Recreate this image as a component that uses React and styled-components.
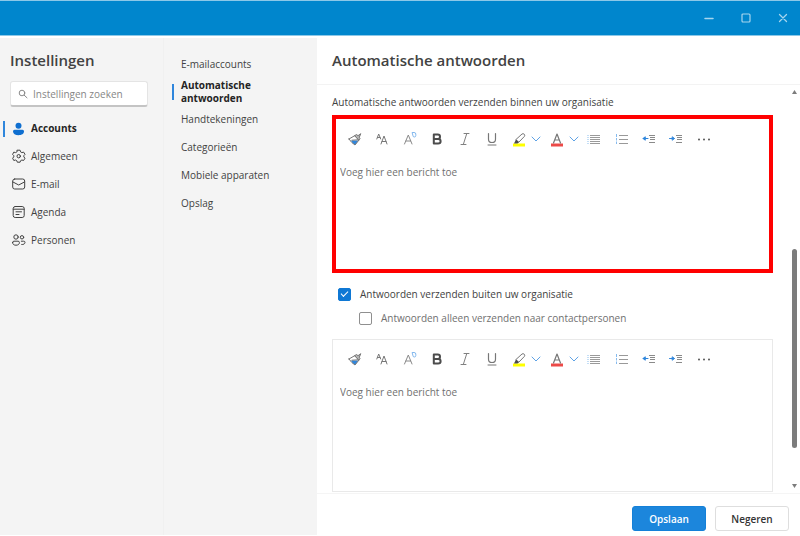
import { useState } from "react";
import styled, { createGlobalStyle } from "styled-components";

const GlobalStyle = createGlobalStyle`
  * {
    box-sizing: border-box;
  }

  body {
    margin: 0;
    background: #ffffff;
    color: #424242;
    font-family: "Open Sans", "Noto Sans", sans-serif;
    font-size: 10px;
    line-height: 14px;
  }

  button, input, textarea {
    font-family: inherit;
    font-size: inherit;
    line-height: inherit;
    color: inherit;
  }
`;

const Window = styled.div`
  display: flex;
  flex-direction: column;
  height: 100vh;
`;

const TitleBar = styled.header`
  display: flex;
  justify-content: flex-end;
  align-items: center;
  height: 36px;
  flex-shrink: 0;
  padding-right: 8px;
  gap: 18px;
  background: #0086cd;
  border-top: 1px solid #8cc8e8;
  border-bottom: 1px solid #8cc8e8;
`;

const WindowButton = styled.button`
  display: flex;
  align-items: center;
  justify-content: center;
  width: 19px;
  height: 19px;
  padding: 0;
  border: 0;
  background: none;
  color: #a6d5ee;
`;

const Body = styled.div`
  display: flex;
  flex: 1;
  min-height: 0;
  padding-bottom: 1px;
`;

const Sidebar = styled.nav`
  width: 164px;
  flex-shrink: 0;
  padding-top: 12px;
  margin-top: 2px;
  background: #f4f4f4;
  border-right: 1px solid #f0f0f0;
`;

const SidebarTitle = styled.h1`
  margin: 0 0 11px 10px;
  font-size: 15px;
  line-height: 20px;
  font-weight: 600;
`;

const SearchBox = styled.label`
  display: flex;
  align-items: center;
  height: 26px;
  margin: 0 15px 8px 10px;
  padding: 0 7px;
  gap: 5px;
  background: #ffffff;
  border: 1px solid #e4e4e4;
  border-bottom: 2px solid #c4c4c4;
  border-radius: 3px;
  color: #8a8a8a;
`;

const SearchInput = styled.input`
  flex: 1;
  min-width: 0;
  padding: 0;
  border: 0;
  outline: 0;
  background: none;

  &::placeholder {
    color: #868686;
    opacity: 1;
  }
`;

const NavList = styled.ul`
  margin: 0;
  padding: 0;
  list-style: none;
`;

const NavLink = styled.a`
  display: flex;
  align-items: center;
  height: ${({ $active }) => ($active ? "27px" : "28px")};
  color: ${({ $active }) => ($active ? "#242424" : "#424242")};
  font-weight: ${({ $active }) => ($active ? 700 : 400)};
  line-height: 13px;
  text-decoration: none;

  &::before {
    content: "";
    width: 2px;
    height: 16px;
    flex-shrink: 0;
    margin: 0 7px 0 ${({ $inset }) => $inset || "3px"};
    background: ${({ $active }) => ($active ? "#2f86dc" : "transparent")};
  }

  svg {
    margin-right: 5px;
    flex-shrink: 0;
  }
`;

const SubNav = styled.nav`
  width: 153px;
  flex-shrink: 0;
  padding: 12px 40px 0 0;
  margin-top: 2px;
  background: #f4f4f4;
`;

const Panel = styled.main`
  display: flex;
  flex-direction: column;
  flex: 1;
  min-width: 0;
`;

const PanelTitle = styled.h2`
  flex-shrink: 0;
  margin: 0;
  padding: 14px 15px;
  height: 49px;
  border-bottom: 1px solid #f3f3f3;
  font-size: 15px;
  line-height: 20px;
  font-weight: 600;
`;

const PanelBody = styled.div`
  display: flex;
  flex: 1;
  min-height: 0;
`;

const Content = styled.div`
  flex: 1;
  min-width: 0;
  padding: 10px 15px 0;
  overflow: hidden;
`;

const Intro = styled.p`
  margin: 0 0 6px;
  line-height: 14px;
`;

const EditorBox = styled.section`
  display: flex;
  flex-direction: column;
  height: ${({ $highlight }) => ($highlight ? "158px" : "153px")};
  padding: ${({ $highlight }) => ($highlight ? "8px 4px 4px" : "7px 7px 7px")};
  border: ${({ $highlight }) => ($highlight ? "4px solid #ff0000" : "1px solid #e9e9e9")};
`;

const Toolbar = styled.div`
  display: flex;
  justify-content: space-between;
  align-items: center;
  width: 100%;
  max-width: 365px;
  height: 24px;
  margin-left: 7px;
`;

const ToolButton = styled.button`
  display: flex;
  align-items: center;
  justify-content: center;
  width: 16px;
  height: 20px;
  padding: 0;
  border: 0;
  background: none;
`;

const SplitButton = styled.div`
  display: flex;
  align-items: center;
  gap: 4px;
  margin-right: -4px;
`;

const ChevronButton = styled(ToolButton)`
  width: 10px;
`;

const Message = styled.textarea`
  flex: 1;
  width: 100%;
  margin-top: 14px;
  padding: 0;
  border: 0;
  outline: 0;
  resize: none;
  background: none;

  &::placeholder {
    color: #707070;
    opacity: 1;
  }
`;

const Options = styled.div`
  display: flex;
  flex-direction: column;
  gap: 10px;
  padding: 14px 0 14px 6px;
`;

const Option = styled.label`
  display: flex;
  align-items: center;
  gap: 9px;
  margin-left: ${({ $nested }) => ($nested ? "21px" : "0")};
  color: ${({ $nested }) => ($nested ? "#707070" : "#424242")};
`;

const CheckBox = styled.input`
  appearance: none;
  width: 13px;
  height: 13px;
  margin: 0;
  border: 1px solid #8f8f8f;
  border-radius: 2px;
  background: #ffffff;

  &:checked {
    display: grid;
    place-items: center;
    border-color: #0f78d4;
    background: #0f78d4;
  }

  &:checked::after {
    content: "";
    width: 6px;
    height: 3px;
    border-left: 1px solid #ffffff;
    border-bottom: 1px solid #ffffff;
    rotate: -45deg;
    translate: 0 -1px;
  }
`;

const ScrollRail = styled.div`
  display: flex;
  flex-direction: column;
  align-items: center;
  width: 12px;
  padding: 5px 0 5px;
  color: #7c7c7c;
`;

const ScrollSpace = styled.div`
  flex: ${({ $size }) => $size};
`;

const ScrollThumb = styled.div`
  flex: 198;
  width: 5px;
  border-radius: 3px;
  background: #7c7c7c;
`;

const Footer = styled.footer`
  display: flex;
  justify-content: flex-end;
  flex-shrink: 0;
  gap: 9px;
  height: 42px;
  padding: 12px 11px 4px;
  border-top: 1px solid #f5f5f5;
`;

const ActionButton = styled.button`
  width: 74px;
  height: 25px;
  padding: 0;
  border: 1px solid ${({ $primary }) => ($primary ? "#1480d8" : "#dedede")};
  border-radius: 3px;
  background: ${({ $primary }) => ($primary ? "#1c86dc" : "#ffffff")};
  color: ${({ $primary }) => ($primary ? "#ffffff" : "#333333")};
  font-weight: 600;
`;

const Svg = ({ size = 14, children }) => (
  <svg
    width={size}
    height={size}
    viewBox={`0 0 ${size} ${size}`}
    fill="none"
    stroke="currentColor"
    strokeLinecap="round"
    strokeLinejoin="round"
    aria-hidden="true"
  >
    {children}
  </svg>
);

const PersonIcon = () => (
  <Svg>
    <circle cx="6.5" cy="3.8" r="3" fill="#0f6fd0" stroke="none" />
    <path d="M1 9.300Q1 7.800 2.500 7.800h8q1.500 0 1.500 1.500c0 2.600-2.300 3.900-5.500 3.900S1 11.900 1 9.300z" fill="#0f6fd0" stroke="none" />
  </Svg>
);

const GearIcon = () => (
  <Svg>
    <path d="M5.300 1.200h2.800l.5 1.700 1.300.7 1.700-.5 1.400 2.300-1.200 1.300v1.200l1.200 1.300-1.400 2.300-1.700-.5-1.300.7-.5 1.500H5.300l-.5-1.500-1.300-.7-1.700.5L.6 9.200l1.200-1.300V6.700L.6 5.400 1.800 3.100l1.700.5 1.300-.7z" />
    <circle cx="6.700" cy="7.200" r="1.700" />
  </Svg>
);

const MailIcon = () => (
  <Svg>
    <rect x="0.700" y="2" width="12" height="10" rx="2" />
    <path d="M1 5l5.700 3L12.400 5" />
  </Svg>
);

const CalendarIcon = () => (
  <Svg>
    <rect x="1.200" y="1.500" width="11" height="11" rx="2" />
    <path d="M1.200 4.200h11M4 6.800h5.500M4 9.500h3" />
  </Svg>
);

const PeopleIcon = () => (
  <Svg>
    <circle cx="4" cy="4" r="2.200" />
    <circle cx="10" cy="4.300" r="1.700" />
    <path d="M.6 9.500q0-1.300 1.300-1.300h4.200q1.300 0 1.300 1.300c0 2-1.500 2.700-3.400 2.700S.6 11.500.6 9.500zM9.300 8.200h2.400q1.300 0 1.300 1.100c0 1.700-1.500 2.400-3.300 2.200" />
  </Svg>
);

const SearchIcon = () => (
  <Svg size={10}>
    <circle cx="4" cy="4" r="2.800" />
    <path d="M6.200 6.200L9 8.800" />
  </Svg>
);

const PainterIcon = () => (
  <Svg size={16}>
    <path d="M4 9.500h7.500L8 14Q5.500 13 4 9.500z" fill="#2f86dc" stroke="none" />
    <path d="M2 8l6-3.500 4 4.500-4 5Q4.500 12 2 8zM5 9.200l6.500-.4" stroke="#777777" />
    <path d="M8 4.500l1.500-1 1.500 1.200 2.800-2-1.500 3.500.7 1.500-1 1.300z" stroke="#777777" fill="#b5b5b5" />
  </Svg>
);

// two letters of different sizes
const FontFaceIcon = () => (
  <Svg size={16}>
    <path d="M2.800 8L4.700 3l2 5M3.400 6.500h2.600" stroke="#777777" />
    <path d="M7 13l3-8 3 8M8 10.500h4" stroke="#777777" />
  </Svg>
);

const FontSizeIcon = () => (
  <Svg size={16}>
    <path d="M2.500 13L6.300 4l3.700 9M3.900 10h4.800" stroke="#8a8a8a" />
    <path d="M10.500 1.500h1.500q1.800 0 1.800 1.500v1.500q0 1.500-1.500 1.500T10.800 4.500z" stroke="#83b8ee" />
  </Svg>
);

const BoldIcon = () => (
  <Svg size={16}>
    <path d="M4.800 3.500h4q2.200 0 2.200 2.200T8.800 7.900h-4zM4.800 7.900h4.300q2.500 0 2.500 2.300t-2.500 2.300H4.800z" stroke="#4c4c4c" strokeWidth="2" />
  </Svg>
);

const ItalicIcon = () => (
  <Svg size={16}>
    <path d="M7 2.500h5M4 13.500h5M9.800 2.500L6.300 13.500" stroke="#808080" />
  </Svg>
);

const UnderlineIcon = () => (
  <Svg size={16}>
    <path d="M4.500 2.500v5.700q0 3.300 3.500 3.300t3.500-3.300V2.500" stroke="#777777" strokeWidth="1.200" />
    <path d="M4 14h8" stroke="#777777" />
  </Svg>
);

const HighlightIcon = () => (
  <Svg size={16}>
    <path d="M2 14h12" stroke="#ffff00" strokeWidth="3" strokeLinecap="butt" />
    <path d="M5 8.500l6-5.500q1.200-.8 2.200.2t.2 2.200L8 11z" stroke="#777777" />
    <path d="M5 8.500L8 11l-1.500 1.500H3z" fill="#4c4c4c" stroke="none" />
  </Svg>
);

const FontColorIcon = () => (
  <Svg size={16}>
    <path d="M2 14h12" stroke="#ec4a48" strokeWidth="3" strokeLinecap="butt" />
    <path d="M4.500 12L8 3l3.500 9M5.700 9h4.600" stroke="#777777" strokeWidth="1.200" />
  </Svg>
);

const ChevronIcon = () => (
  <Svg size={10}>
    <path d="M1 3l4 4 4-4" stroke="#5fa3e6" />
  </Svg>
);

const BulletsIcon = () => (
  <Svg size={16}>
    <path d="M1 4.500h2M1 6.500h2M1 8.500h2M1 10.500h2M1 12.500h2" stroke="#c4def6" strokeLinecap="butt" />
    <path d="M4 4.500h10M4 6.500h10M4 8.500h10M4 10.500h10M4 12.500h10" stroke="#9a9a9a" strokeLinecap="butt" />
  </Svg>
);

const NumberingIcon = () => (
  <Svg size={16}>
    <path d="M2.500 3v3M2.500 7v2.500M2.500 10.500v2.500" stroke="#86bbef" strokeLinecap="butt" />
    <path d="M5 4.500h9M5 8.500h9M5 12.500h9" stroke="#999999" strokeLinecap="butt" />
  </Svg>
);

const IndentIcon = ({ decrease }) => (
  <Svg size={16}>
    <path
      d={decrease ? "M7 7.500H2M4 6l-2 1.500L4 9z" : "M1.500 7.500H6M4.500 6l2 1.500-2 1.500z"}
      fill="#2f86dc"
      stroke="#2f86dc"
    />
    <path d="M8 4.500h6M9 6.500h5M9 8.500h5M8 11.500h6" stroke="#8a8a8a" strokeLinecap="butt" />
  </Svg>
);

const MoreIcon = () => (
  <Svg size={16}>
    <g fill="#555555" stroke="none">
      <circle cx="3" cy="8.500" r="1" />
      <circle cx="8" cy="8.500" r="1" />
      <circle cx="13" cy="8.500" r="1" />
    </g>
  </Svg>
);

const ScrollArrow = ({ down }) => (
  <svg width="5" height="4" viewBox="0 0 5 4" fill="currentColor" aria-hidden="true">
    <path d={down ? "M0 0h5L2.500 4z" : "M0 4h5L2.500 0z"} />
  </svg>
);

const sections = [
  { label: "Accounts", icon: PersonIcon, active: true },
  { label: "Algemeen", icon: GearIcon },
  { label: "E-mail", icon: MailIcon },
  { label: "Agenda", icon: CalendarIcon },
  { label: "Personen", icon: PeopleIcon },
];

const pages = [
  { label: "E-mailaccounts" },
  { label: "Automatische antwoorden", active: true },
  { label: "Handtekeningen" },
  { label: "Categorieën" },
  { label: "Mobiele apparaten" },
  { label: "Opslag" },
];

const tools = [
  { label: "Opmaak kopiëren", icon: PainterIcon },
  { label: "Lettertype", icon: FontFaceIcon },
  { label: "Tekengrootte", icon: FontSizeIcon },
  { label: "Vet", icon: BoldIcon },
  { label: "Cursief", icon: ItalicIcon },
  { label: "Onderstrepen", icon: UnderlineIcon },
  { label: "Markeren", icon: HighlightIcon, split: true },
  { label: "Tekstkleur", icon: FontColorIcon, split: true },
  { label: "Opsommingstekens", icon: BulletsIcon },
  { label: "Nummering", icon: NumberingIcon },
  { label: "Inspringing verkleinen", icon: () => <IndentIcon decrease /> },
  { label: "Inspringing vergroten", icon: () => <IndentIcon /> },
  { label: "Meer opties", icon: MoreIcon },
];

const Editor = ({ highlight, label }) => (
  <EditorBox $highlight={highlight}>
    <Toolbar role="toolbar" aria-label="Opmaak">
      {tools.map(({ label: name, icon: Icon, split }) =>
        split ? (
          <SplitButton key={name}>
            <ToolButton type="button" aria-label={name}>
              <Icon />
            </ToolButton>
            <ChevronButton type="button" aria-label={`${name}, opties`}>
              <ChevronIcon />
            </ChevronButton>
          </SplitButton>
        ) : (
          <ToolButton key={name} type="button" aria-label={name}>
            <Icon />
          </ToolButton>
        )
      )}
    </Toolbar>
    <Message aria-label={label} placeholder="Voeg hier een bericht toe" />
  </EditorBox>
);

export default function App() {
  const [external, setExternal] = useState(true);
  const [contactsOnly, setContactsOnly] = useState(false);

  return (
    <Window>
      <GlobalStyle />
      <TitleBar>
        <WindowButton type="button" aria-label="Minimaliseren">
          <Svg size={10}><path d="M1 5.500h8" strokeWidth="1.500" /></Svg>
        </WindowButton>
        <WindowButton type="button" aria-label="Maximaliseren">
          <Svg size={10}><rect x="1" y="1" width="8" height="8" rx="1" strokeWidth="1.200" /></Svg>
        </WindowButton>
        <WindowButton type="button" aria-label="Sluiten">
          <Svg size={10}><path d="M1.500 1.500l7 7M8.500 1.500l-7 7" strokeWidth="1.300" /></Svg>
        </WindowButton>
      </TitleBar>
      <Body>
        <Sidebar aria-label="Instellingen">
          <SidebarTitle>Instellingen</SidebarTitle>
          <SearchBox>
            <SearchIcon />
            <SearchInput type="text" aria-label="Instellingen zoeken" placeholder="Instellingen zoeken" />
          </SearchBox>
          <NavList>
            {sections.map(({ label, icon: Icon, active }) => (
              <li key={label}>
                <NavLink href="#" $active={active}>
                  <Icon />
                  {label}
                </NavLink>
              </li>
            ))}
          </NavList>
        </Sidebar>
        <SubNav aria-label="Accounts">
          <NavList>
            {pages.map(({ label, active }) => (
              <li key={label}>
                <NavLink href="#" $active={active} $inset="8px">
                  {label}
                </NavLink>
              </li>
            ))}
          </NavList>
        </SubNav>
        <Panel>
          <PanelTitle>Automatische antwoorden</PanelTitle>
          <PanelBody>
            <Content>
              <Intro>Automatische antwoorden verzenden binnen uw organisatie</Intro>
              <Editor highlight label="Bericht binnen uw organisatie" />
              <Options>
                <Option>
                  <CheckBox type="checkbox" checked={external} onChange={(e) => setExternal(e.target.checked)} />
                  Antwoorden verzenden buiten uw organisatie
                </Option>
                <Option $nested>
                  <CheckBox type="checkbox" checked={contactsOnly} onChange={(e) => setContactsOnly(e.target.checked)} />
                  Antwoorden alleen verzenden naar contactpersonen
                </Option>
              </Options>
              <Editor label="Bericht buiten uw organisatie" />
            </Content>
            <ScrollRail>
              <ScrollArrow />
              <ScrollSpace $size={155} />
              <ScrollThumb />
              <ScrollSpace $size={36} />
              <ScrollArrow down />
            </ScrollRail>
          </PanelBody>
          <Footer>
            <ActionButton type="button" $primary>Opslaan</ActionButton>
            <ActionButton type="button">Negeren</ActionButton>
          </Footer>
        </Panel>
      </Body>
    </Window>
  );
}
